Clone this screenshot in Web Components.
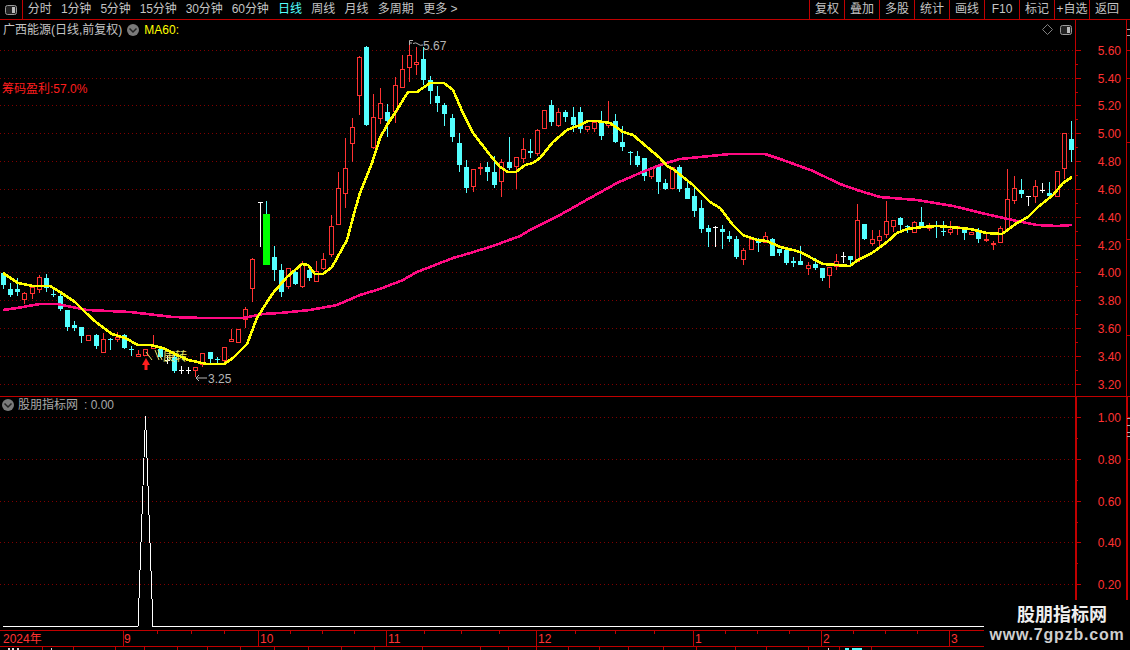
<!DOCTYPE html>
<html lang="zh"><head><meta charset="utf-8"><title>K</title>
<style>
html,body{margin:0;padding:0;background:#000;width:1130px;height:650px;overflow:hidden}
body{font:12px "Liberation Sans","Noto Sans CJK SC",sans-serif;color:#c0c0c0}
</style></head><body>
<term-app>
  <tool-bar>
    <tool-item>分时</tool-item><tool-item narrow>1分钟</tool-item><tool-item narrow>5分钟</tool-item><tool-item tight>15分钟</tool-item><tool-item tight>30分钟</tool-item><tool-item tight>60分钟</tool-item><tool-item active>日线</tool-item><tool-item>周线</tool-item><tool-item>月线</tool-item><tool-item>多周期</tool-item><tool-item>更多 &gt;</tool-item>
    <tool-btn slot="right">复权</tool-btn><tool-btn slot="right">叠加</tool-btn><tool-btn slot="right">多股</tool-btn><tool-btn slot="right">统计</tool-btn><tool-btn slot="right">画线</tool-btn><tool-btn slot="right">F10</tool-btn><tool-btn slot="right">标记</tool-btn><tool-btn slot="right">+自选</tool-btn><tool-btn slot="right">返回</tool-btn>
  </tool-bar>
  <kline-panel></kline-panel>
  <indicator-panel></indicator-panel>
  <time-axis></time-axis>
  <wm-badge></wm-badge>
</term-app>
<script>
const NS='font-family="Liberation Sans,Noto Sans CJK SC,sans-serif"';
const RED='#ff3232',LINE='#c00000',GRID='#800000';
const FONT='"Liberation Sans","Noto Sans CJK SC",sans-serif';
function panelIcon(){return `<svg width="12" height="10" viewBox="0 0 12 10"><rect x=".5" y=".5" width="11" height="9" rx="2" fill="#222" stroke="#999"/><rect x="7" y="2" width="3" height="6" fill="#bbb"/></svg>`}
function chevron(cx,cy){return `<circle cx="${cx}" cy="${cy}" r="6" fill="#7a7a7a"/><path d="M${cx-3.5} ${cy-1.5}L${cx} ${cy+2}L${cx+3.5} ${cy-1.5}" fill="none" stroke="#222" stroke-width="1.5"/>`}

class TermApp extends HTMLElement{constructor(){super();this.attachShadow({mode:'open'}).innerHTML=`<style>:host{display:flex;flex-direction:column;position:relative;width:1130px;height:650px;background:#000;overflow:hidden}</style><slot></slot>`}}
class ToolBar extends HTMLElement{constructor(){super();this.attachShadow({mode:'open'}).innerHTML=`<style>
:host{display:flex;flex:none;height:19px;border-bottom:1px solid ${LINE};align-items:stretch;box-sizing:content-box}
.ico{width:23px;flex:none;border-right:1px solid ${LINE};box-sizing:border-box;display:flex;align-items:center;justify-content:center;padding-right:1px}
.ico svg{display:block}
.left{flex:1;display:flex;gap:9.3px;align-items:center;padding-left:4.700px}
.right{display:flex;padding-right:6px}
</style><div class="ico">${panelIcon()}</div><div class="left"><slot></slot></div><div class="right"><slot name="right"></slot></div>`}}
class ToolItem extends HTMLElement{constructor(){super();this.attachShadow({mode:'open'}).innerHTML=`<style>
:host{display:block;font:12px ${FONT};line-height:19px;color:#c4c4c4;white-space:nowrap}
:host([active]){color:#54ffff}
:host([narrow]){letter-spacing:-.2px}
:host([tight]){letter-spacing:-.15px}</style><slot></slot>`}}
class ToolBtn extends HTMLElement{constructor(){super();this.attachShadow({mode:'open'}).innerHTML=`<style>
:host{display:block;width:35px;box-sizing:border-box;border-left:1px solid ${LINE};text-align:center;font:12px ${FONT};line-height:19px;color:#c4c4c4;white-space:nowrap}
</style><slot></slot>`}}

class PriceAxis extends HTMLElement{
  connectedCallback(){
    const top=+this.getAttribute('top'),h=+this.getAttribute('h');
    const labels=JSON.parse(this.getAttribute('labels'));
    const minors=JSON.parse(this.getAttribute('minors'));
    const rt=JSON.parse(this.getAttribute('rt')||'[]');
    const gt=JSON.parse(this.getAttribute('gt')||'[]');
    const w=+this.getAttribute('lw')||1;
    let s=`<rect x="1075" y="${top}" width="${w}" height="${h}" fill="${LINE}"/><rect x="1126" y="${top}" width="${w}" height="${h}" fill="${LINE}"/>`;
    labels.forEach(([y,t])=>{s+=`<rect x="1075" y="${y}" width="6" height="1" fill="${LINE}"/><text x="1121" y="${y+4.5}" text-anchor="end" fill="${RED}" font-size="12" ${NS}>${t}</text>`});
    minors.forEach(y=>{s+=`<rect x="1075" y="${y}" width="3" height="1" fill="${LINE}"/>`});
    rt.forEach(y=>{s+=`<rect x="1126" y="${y}" width="4" height="1" fill="${LINE}"/>`});
    gt.forEach(y=>{s+=`<rect x="1127" y="${y}" width="3" height="1" fill="#aaa"/>`});
    this.attachShadow({mode:'open'}).innerHTML=`<style>:host{display:block;flex:none;width:55px}svg{display:block}</style><svg width="55" height="${h}" viewBox="1075 ${top} 55 ${h}">${s}</svg>`;
  }
}
const GY=[50,78,105,133,161,189,217,245,272,300,328,356,384];
const C=[[3,273,285,272,289,'c'],[10,289,295,283,297,'c'],[17,289,292,278,296,'c'],[24,293,300,292,304,'r'],[32,287,294,285,299,'r'],[39,277,290,275,293,'r'],[46,278,288,274,292,'c'],[53,294,295,290,297,'c'],[60,296,309,293,311,'c'],[67,310,327,310,331,'c'],[74,325,328,321,331,'c'],[81,327,336,327,343,'c'],[88,335,341,335,341,'r'],[96,335,346,334,349,'c'],[103,339,353,333,353,'r'],[110,339,340,338,350,'c'],[117,337,340,332,342,'r'],[124,335,348,334,349,'c'],[131,349,350,346,356,'c'],[138,354,357,350,357,'r'],[145,349,356,349,356,'r'],[153,346,349,335,349,'r'],[160,349,357,348,358,'c'],[167,360,361,356,364,'w'],[174,357,371,355,373,'c'],[181,370,371,366,374,'w'],[188,370,371,367,374,'w'],[195,367,371,367,377,'r'],[202,353,365,353,367,'r'],[210,352,359,352,363,'c'],[217,359,360,357,363,'c'],[224,347,361,347,362,'r'],[231,339,342,329,342,'r'],[238,329,343,329,343,'r'],[245,309,320,307,328,'r'],[252,259,289,258,302,'r'],[260,202,203,202,247,'w'],[266,214,265,201,265,'g'],[274,257,270,246,281,'c'],[281,270,292,264,297,'c'],[288,268,287,268,289,'r'],[295,272,284,270,285,'c'],[302,263,287,261,288,'r'],[309,270,278,267,281,'c'],[316,271,282,261,282,'r'],[323,259,269,253,270,'r'],[331,226,255,215,257,'r'],[338,188,225,172,225,'r'],[345,168,194,138,208,'r'],[352,127,144,118,162,'r'],[359,57,96,56,115,'r'],[366,47,125,46,126,'c'],[373,117,148,94,149,'r'],[380,103,119,88,124,'r'],[387,112,121,104,137,'c'],[395,85,112,77,123,'r'],[402,69,88,55,88,'r'],[409,55,68,42,82,'r'],[416,62,65,47,75,'r'],[423,59,80,47,85,'c'],[430,80,91,76,104,'c'],[437,96,103,86,112,'c'],[444,105,114,103,126,'c'],[452,118,137,114,142,'c'],[459,143,165,133,172,'c'],[466,167,188,160,193,'c'],[473,169,187,169,192,'r'],[480,167,169,163,175,'r'],[487,167,172,162,181,'c'],[494,172,185,156,188,'c'],[501,162,182,159,197,'r'],[509,162,168,137,170,'c'],[516,157,167,157,189,'r'],[523,149,159,138,163,'r'],[530,151,153,139,158,'c'],[537,130,154,129,156,'r'],[544,110,129,110,129,'r'],[551,105,122,100,126,'c'],[558,112,126,108,127,'r'],[565,112,117,110,122,'c'],[573,117,125,107,132,'c'],[580,112,129,107,133,'c'],[587,126,130,126,132,'r'],[594,122,129,120,132,'r'],[601,123,136,111,140,'c'],[608,122,126,101,128,'r'],[615,121,142,114,143,'c'],[622,142,147,126,151,'c'],[630,152,153,151,165,'c'],[637,156,165,151,167,'c'],[644,158,176,158,181,'c'],[651,168,177,168,179,'r'],[658,166,182,166,194,'c'],[665,183,189,179,190,'c'],[672,167,189,167,189,'r'],[679,167,189,165,192,'c'],[687,188,199,180,199,'c'],[694,196,211,187,217,'c'],[701,208,229,200,233,'c'],[708,228,232,225,247,'c'],[715,227,228,226,247,'w'],[722,229,232,225,249,'c'],[729,236,239,231,242,'c'],[736,239,257,236,259,'c'],[743,250,260,248,265,'r'],[751,239,250,239,250,'r'],[758,240,243,238,252,'c'],[765,236,243,232,243,'r'],[772,239,256,238,256,'c'],[779,249,253,249,256,'c'],[786,250,263,250,265,'c'],[793,261,263,257,267,'c'],[800,261,265,246,265,'c'],[808,265,269,262,275,'r'],[815,264,268,258,270,'c'],[822,268,278,268,281,'c'],[829,267,276,267,288,'r'],[836,261,267,254,270,'r'],[843,256,257,252,263,'w'],[850,256,260,256,265,'c'],[857,220,262,204,262,'r'],[864,224,239,224,240,'c'],[872,239,244,230,246,'r'],[879,236,241,230,247,'r'],[886,221,235,201,238,'r'],[893,220,227,220,232,'r'],[900,218,225,217,232,'c'],[907,226,227,225,233,'c'],[914,222,233,221,233,'r'],[921,222,226,207,227,'c'],[929,226,229,223,231,'r'],[936,225,227,221,238,'c'],[943,231,232,221,236,'c'],[950,229,233,221,235,'r'],[957,226,229,226,235,'r'],[964,229,233,227,240,'c'],[971,232,235,232,235,'r'],[978,232,239,228,243,'c'],[986,239,241,233,242,'r'],[993,243,245,241,250,'r'],[1000,228,243,226,243,'r'],[1007,199,230,169,230,'r'],[1014,188,201,176,204,'r'],[1021,190,194,179,198,'c'],[1028,196,197,196,206,'w'],[1035,186,197,180,203,'r'],[1042,190,191,183,193,'w'],[1049,193,196,182,197,'c'],[1057,171,197,171,197,'r'],[1064,133,169,133,179,'r'],[1071,139,150,121,162,'c']];
const YL="3,273 18,283 33,286 50,286 60,292 75,302 85,312 97,323 112,334 125,338 138,345 150,345 163,348 173,353 188,360 207,364 224,364 233,358 247,344 257,318 267,302 273,293 287,277 302,264 308,265 315,274 323,274 332,267 347,240 355,210 360,193 372,163 380,138 387,125 395,113 408,92 417,92 430,83 444,83 453,90 463,113 473,133 490,155 500,167 508,172 516,172 525,165 533,163 540,158 553,142 567,130 580,125 588,121 597,121 610,123 623,132 633,135 647,147 660,158 667,166 673,169 693,185 710,202 720,208 733,225 743,235 757,240 767,241 780,247 793,250 800,252 823,264 850,266 858,260 872,253 887,242 897,233 907,229 923,227 937,226 950,227 970,229 987,233 1002,234 1017,223 1028,217 1038,207 1053,195 1063,183 1072,177";
const PK="3,310 17,308 40,304 57,304 87,310 130,312 173,317 203,318 243,318 263,314 280,313 310,310 337,305 360,295 380,289 403,280 417,272 453,258 467,254 493,246 520,236 530,230 560,215 590,198 617,183 640,173 660,165 680,159 700,157 730,154 765,154 783,160 813,171 840,184 857,190 880,197 917,200 953,206 990,215 1017,221 1037,225 1057,226 1072,225";
function candle([x,t,b,wt,wb,k]){
  const col={r:RED,c:'#54ffff',w:'#ffffff',g:'#00ff00'}[k];
  const wc=k==='g'?'#54ffff':col;
  let s=`<rect x="${x}" y="${wt}" width="1" height="${wb-wt}" fill="${wc}"/>`;
  if(k==='r') s=`<rect x="${x}" y="${wt}" width="1" height="${t-wt}" fill="${col}"/><rect x="${x}" y="${b}" width="1" height="${wb-b}" fill="${col}"/><rect x="${x-1.5}" y="${t+.5}" width="4" height="${Math.max(b-t-1,1)}" fill="#000" stroke="${col}"/>`;
  else if(k==='g') s+=`<rect x="${x-3}" y="${t}" width="7" height="${b-t}" fill="${col}"/>`;
  else if(k==='w') s+=`<rect x="${x-2}" y="${t}" width="5" height="1" fill="${col}"/>`;
  else s+=`<rect x="${x-2}" y="${t}" width="5" height="${b-t}" fill="${col}"/>`;
  return s;
}
class KlinePanel extends HTMLElement{constructor(){super();
  const grid=GY.map(y=>`<line x1="0" x2="1075" y1="${y+.5}" y2="${y+.5}" stroke="${GRID}" stroke-dasharray="1 3"/>`).join('');
  const cs=C.map(candle).join('');
  const labs=[[50,'5.60'],[78,'5.40'],[105,'5.20'],[133,'5.00'],[161,'4.80'],[189,'4.60'],[217,'4.40'],[245,'4.20'],[272,'4.00'],[300,'3.80'],[328,'3.60'],[356,'3.40'],[384,'3.20']];
  this.attachShadow({mode:'open'}).innerHTML=`<style>
:host{display:flex;flex:none;height:376px;border-bottom:1px solid ${LINE};position:relative}
.plot{width:1075px;height:376px;flex:none;position:relative}
svg{display:block}
.legend{position:absolute;left:3px;top:3px;display:flex;align-items:center;font:12px ${FONT};line-height:14px;color:#c4c4c4;white-space:nowrap}
.legend svg{margin:0 5px 0 5px}
.legend b{font-weight:400;color:#ffff00}
.chip{position:absolute;left:2px;top:62px;font:12px/14px ${FONT};color:#ff1e1e;white-space:nowrap}
.tools{position:absolute;right:3px;top:4px;display:flex;gap:7px;align-items:center}
</style><div class="plot">
<svg width="1075" height="376" viewBox="0 20 1075 376">
${grid}${cs}
<text x="163" y="361" fill="#e6e26a" font-size="12" ${NS}>庚转</text>
<path d="M146 352L152 360M155 350L159 360M158 350L162 360" stroke="#e6e26a" fill="none"/>
<g shape-rendering="crispEdges"><polyline points="${PK}" fill="none" stroke="#ff0a82" stroke-width="2.600"/><polyline points="${YL}" fill="none" stroke="#ffff00" stroke-width="2.600"/></g>
<path d="M142 365L146 358L150 365Z" fill="#ff1e1e"/><rect x="144.500" y="364" width="3" height="6" fill="#ff1e1e"/>
<path d="M409.500 45V40.500H413M410 43H412M413 43.500Q416 42 418 44T423 45" stroke="#b4b4b4" fill="none"/>
<text x="423" y="50" fill="#b4b4b4" font-size="12" ${NS}>5.67</text>
<path d="M207 378H196M199 375L196 378L199 381" stroke="#b4b4b4" fill="none"/>
<text x="208" y="383" fill="#b4b4b4" font-size="12" ${NS}>3.25</text>
</svg>
<div class="legend"><span>广西能源(日线,前复权)</span><svg width="12" height="12" viewBox="0 0 12 12">${chevron(6,6)}</svg><b>MA60:</b></div>
<div class="chip">筹码盈利:57.0%</div>
<div class="tools"><svg width="11" height="11" viewBox="0 0 11 11"><path d="M5.500 .5L10.500 5.500L5.500 10.500L.5 5.500Z" fill="none" stroke="#808080"/></svg>${panelIcon()}</div>
</div><price-axis top="20" h="376" labels='${JSON.stringify(labs)}' minors='[64,92,119,147,175,203,231,259,286,314,342,370]' rt='[50,78,142,239,335]' gt='[29,35]'></price-axis>`;
}}
class IndicatorPanel extends HTMLElement{constructor(){super();
  const ys=[417,459,501,542,584];
  const grid=ys.map(y=>`<line x1="0" x2="1075" y1="${y+.5}" y2="${y+.5}" stroke="${GRID}" stroke-dasharray="1 3"/>`).join('');
  const labs=[[417,'1.00'],[459,'0.80'],[501,'0.60'],[542,'0.40'],[584,'0.20']];
  this.attachShadow({mode:'open'}).innerHTML=`<style>
:host{display:flex;flex:none;height:233px;position:relative}
.plot{width:1075px;height:233px;flex:none;position:relative}
svg{display:block}
.legend{position:absolute;left:2px;top:1px;display:flex;align-items:center;font:12px/14px ${FONT};color:#a8a8a8;white-space:nowrap}
.legend svg{margin-right:4px}
.legend i{font-style:normal;margin-left:6px}
</style><div class="plot"><svg width="1075" height="233" viewBox="0 397 1075 233">${grid}
<g shape-rendering="crispEdges"><polyline points="3,626.500 138,626.500 145.500,416 153,626.500 1075,626.500" fill="none" stroke="#fff" stroke-width="1"/></g></svg>
<div class="legend"><svg width="12" height="12" viewBox="0 0 12 12">${chevron(6,6)}</svg><span>股朋指标网</span><i>: 0.00</i></div>
</div><price-axis top="397" h="233" lw="2" labels='${JSON.stringify(labs)}' minors='[438,480,522,563,605]' rt='[417,459]' gt='[418,425,432,436]'></price-axis>`;
}}
class TimeAxis extends HTMLElement{constructor(){super();
  const majors=[[123,'9',124],[258,'10',260],[386,'11',388],[536,'12',538],[693,'1',695],[821,'2',823],[949,'3',951]];
  const minors=[157,191,224,290,322,354,424,461,499,575,615,654,725,757,789,853,885,917];
  const bot=[42,73,115,144,177,207,240,274,308,341,374,422,480,508,536,568,599,628,663,696,735,766,808,839,871];
  let s=`<rect width="1130" height="1" y="0" fill="${LINE}"/><rect width="1130" height="1" y="16" fill="${LINE}"/>`;
  s+=`<text x="3" y="13" fill="${RED}" font-size="12" ${NS}>2024年</text>`;
  majors.forEach(([x,t,tx])=>{s+=`<rect x="${x}" y="0" width="1" height="16" fill="${LINE}"/><text x="${tx}" y="13" fill="${RED}" font-size="12" ${NS}>${t}</text>`});
  minors.forEach(x=>{s+=`<rect x="${x}" y="1" width="1" height="3" fill="${LINE}"/>`});
  bot.forEach(x=>{s+=`<rect x="${x}" y="17" width="1" height="3" fill="${LINE}"/>`});
  [[8,2],[12,2],[17,2],[51,1],[828,1],[845,4],[852,10]].forEach(([x,w],i)=>{s+=`<rect x="${x}" y="18" width="${w}" height="2" fill="${i>4?'#54ffff':'#ddd'}"/>`});
  this.attachShadow({mode:'open'}).innerHTML=`<style>:host{display:block;flex:none;height:20px;overflow:hidden}svg{display:block}</style><svg width="1130" height="20" viewBox="0 0 1130 20">${s}</svg>`;
}}
class WmBadge extends HTMLElement{constructor(){super();this.attachShadow({mode:'open'}).innerHTML=`<style>
:host{position:absolute;right:0;bottom:0;width:146px;height:50px;background:#000;display:flex;flex-direction:column;align-items:center;white-space:nowrap;box-sizing:border-box;padding-top:5px}
.a{font:700 18px/21px "Liberation Sans","Noto Sans CJK SC",sans-serif;color:#eee;transform:translateX(5px);margin-bottom:1px}
.b{font:700 16px/16px "Liberation Sans",sans-serif;color:#cfcfcf;letter-spacing:.8px}
</style><div class="a">股朋指标网</div><div class="b">www.7gpzb.com</div>`}}
customElements.define('price-axis',PriceAxis);
customElements.define('term-app',TermApp);customElements.define('tool-bar',ToolBar);customElements.define('tool-item',ToolItem);customElements.define('tool-btn',ToolBtn);
customElements.define('kline-panel',KlinePanel);customElements.define('indicator-panel',IndicatorPanel);customElements.define('time-axis',TimeAxis);customElements.define('wm-badge',WmBadge);
</script>
</body></html>
